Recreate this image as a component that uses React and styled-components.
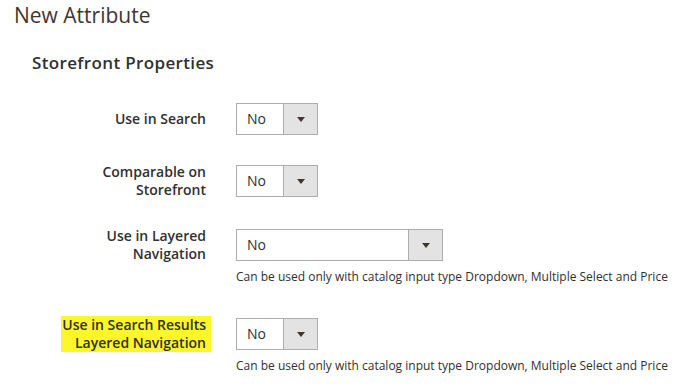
import React from "react";
import styled, { createGlobalStyle } from "styled-components";

const Global = createGlobalStyle`
  html, body { margin: 0; padding: 0; background: #ffffff; }
  body { font-family: "Open Sans", "Noto Sans", sans-serif; color: #303030; }
`;

const Page = styled.div`
  width: 682px;
  height: 384px;
  overflow: hidden;
  padding: 0 14px;
  box-sizing: border-box;
`;

const Title = styled.h1`
  margin: 0;
  padding-top: 1px;
  font-size: 21px;
  line-height: 28px;
  font-weight: 400;
  color: #41362f;
`;

const Legend = styled.h2`
  margin: 23px 0 0 18px;
  font-size: 17px;
  line-height: 22px;
  font-weight: 600;
  color: #303030;
  letter-spacing: 0.35px;
`;

const Fields = styled.div`
  display: flex;
  flex-direction: column;
  gap: 28px;
  margin-top: 29px;
`;

const Row = styled.div`
  display: grid;
  grid-template-columns: 192px auto;
  column-gap: 30px;
  align-items: center;
  justify-content: start;
`;

const Label = styled.label`
  grid-column: 1;
  grid-row: 1;
  text-align: right;
  font-size: 14px;
  line-height: 18px;
  font-weight: 600;
  color: #303030;
`;

const Highlight = styled.span`
  display: inline-block;
  background: #fcf62a;
  padding: 0 5px 0 1px;
  margin-right: -5px;
`;

const Select = styled.div`
  grid-column: 2;
  grid-row: 1;
  display: flex;
  width: ${(p) => (p.$wide ? 207 : 82)}px;
  height: 32px;
  box-sizing: border-box;
  border: 1px solid #adadad;
  background: #ffffff;
`;

const Value = styled.span`
  flex: 1;
  padding-left: 10px;
  font-size: 14px;
  line-height: 30px;
  color: #303030;
`;

const Arrow = styled.span`
  width: 33px;
  flex: none;
  background: #e3e3e3;
  border-left: 1px solid #adadad;
  display: flex;
  align-items: center;
  justify-content: center;
  &::after {
    content: "";
    border-left: 4px solid transparent;
    border-right: 4px solid transparent;
    border-top: 5px solid #41362f;
  }
`;

const Hint = styled.div`
  grid-column: 2;
  grid-row: 2;
  margin-top: 5px;
  padding-bottom: 2px;
  font-size: 12px;
  line-height: 18px;
  color: #303030;
  white-space: nowrap;
`;

const HINT = "Can be used only with catalog input type Dropdown, Multiple Select and Price";

const fields = [
  { label: ["Use in Search"] },
  { label: ["Comparable on", "Storefront"] },
  { label: ["Use in Layered", "Navigation"], wide: true, hint: true },
  { label: ["Use in Search Results", "Layered Navigation"], hint: true, marked: true },
];

function LabelText({ lines }) {
  return lines.map((l, i) => (
    <React.Fragment key={i}>
      {i > 0 && <br />}
      {l}
    </React.Fragment>
  ));
}

export default function App() {
  return (
    <>
      <Global />
      <Page>
        <Title>New Attribute</Title>
        <Legend>Storefront Properties</Legend>
        <Fields>
          {fields.map((f, i) => (
            <Row key={i}>
              <Label>
                {f.marked ? (
                  <Highlight>
                    <LabelText lines={f.label} />
                  </Highlight>
                ) : (
                  <LabelText lines={f.label} />
                )}
              </Label>
              <Select $wide={f.wide}>
                <Value>No</Value>
                <Arrow />
              </Select>
              {f.hint && <Hint>{HINT}</Hint>}
            </Row>
          ))}
        </Fields>
      </Page>
    </>
  );
}
